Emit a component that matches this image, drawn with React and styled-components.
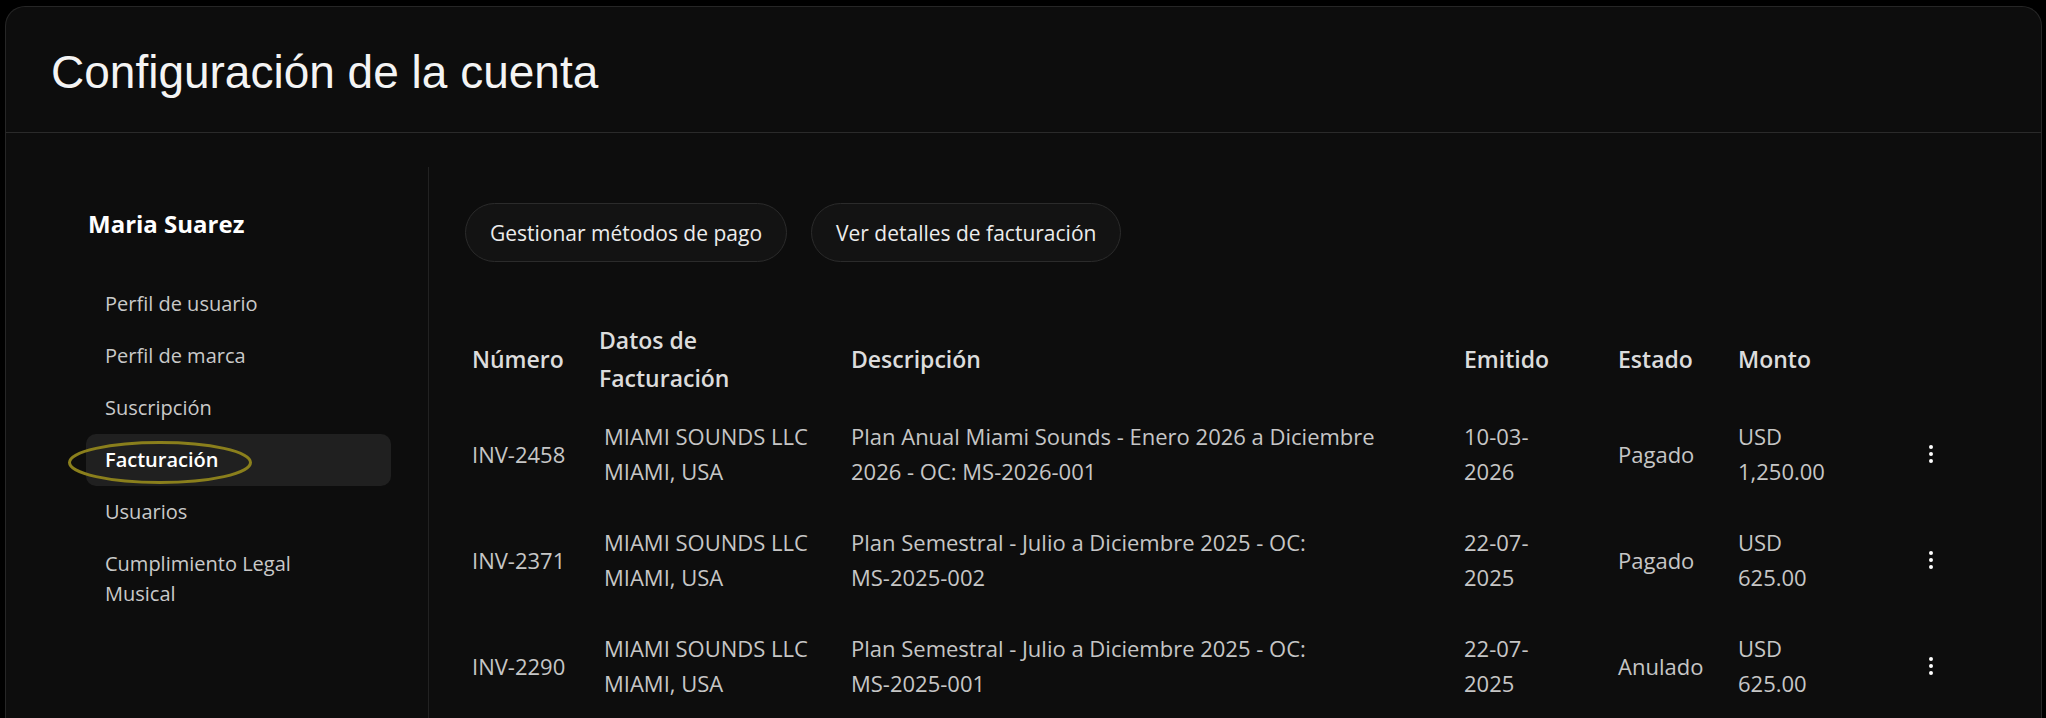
import React from 'react';
import styled, { createGlobalStyle } from 'styled-components';
import { EllipsisVertical } from 'lucide-react';

const GlobalStyle = createGlobalStyle`
  html, body {
    margin: 0;
    background: #000;
    overflow: hidden;
  }
  body {
    font-family: "Open Sans", "Liberation Sans", sans-serif;
  }
`;

const Card = styled.div`
  margin: 6px 4px 0 5px;
  min-height: 760px;
  background: #0d0d0d;
  border: 1px solid #262626;
  border-bottom: none;
  border-radius: 20px 20px 0 0;
  display: flex;
  flex-direction: column;
`;

const Header = styled.header`
  height: 126px;
  box-sizing: border-box;
  border-bottom: 1px solid #2a2a2a;
  display: flex;
  align-items: center;
  padding: 4px 45px 0;
`;

const Title = styled.h1`
  margin: 0;
  font-family: "Liberation Sans", Arial, sans-serif;
  font-weight: 400;
  font-size: 46px;
  color: #f4f4f4;
`;

const Body = styled.div`
  display: flex;
  flex: 1;
`;

const Sidebar = styled.aside`
  width: 423px;
  flex-shrink: 0;
  box-sizing: border-box;
  margin-top: 34px;
  padding: 42px 37px 0 80px;
  border-right: 1px solid #222;
`;

const UserName = styled.div`
  font-weight: 700;
  font-size: 24px;
  line-height: 30px;
  color: #fff;
  padding-left: 2px;
  margin-bottom: 39px;
`;

const NavList = styled.nav`
  display: flex;
  flex-direction: column;
`;

const NavItem = styled.a`
  position: relative;
  display: flex;
  align-items: center;
  min-height: 52px;
  box-sizing: border-box;
  padding: 11px 60px 11px 19px;
  border-radius: 10px;
  font-size: 20px;
  line-height: 30px;
  font-weight: ${(p) => (p.$active ? 600 : 500)};
  color: ${(p) => (p.$active ? '#fff' : '#c9c9c9')};
  background: ${(p) => (p.$active ? '#202020' : 'transparent')};
  text-decoration: none;
  cursor: pointer;
`;

/* hand-drawn ring around the current section */
const Ring = styled.svg`
  position: absolute;
  left: -18px;
  top: 7px;
  width: 184px;
  height: 43px;
  overflow: visible;
  pointer-events: none;
`;

const Main = styled.main`
  flex: 1;
  min-width: 0;
  padding: 70px 0 0 36px;
`;

const Actions = styled.div`
  display: flex;
  gap: 24px;
`;

const PillButton = styled.button`
  height: 59px;
  padding: 0 24px;
  border-radius: 30px;
  border: 1px solid #2b2b2b;
  background: #131313;
  color: #ececec;
  font-family: "Open Sans", sans-serif;
  font-size: 21px;
  font-weight: 500;
  cursor: pointer;
`;

const Table = styled.div`
  margin-top: 59px;
`;

const Row = styled.div`
  display: grid;
  grid-template-columns: 127px 252px 613px 154px 120px 160px 80px;
  align-items: center;
  padding: ${(p) => (p.$head ? '0 0 4px' : '18px 0')};
`;

const HeadCell = styled.div`
  padding-left: 7px;
  max-width: ${(p) => p.$maxw || 'none'};
  font-size: 23px;
  font-weight: 600;
  line-height: 38px;
  color: #dcdcdc;
`;

const Cell = styled.div`
  padding-left: ${(p) => (p.$indent ? 12 : 7)}px;
  max-width: ${(p) => p.$maxw || 'none'};
  font-size: 22px;
  line-height: 35px;
  color: #c6c6c6;
`;

const Code = styled.span`
  white-space: nowrap;
`;

const MenuCell = styled.div`
  display: flex;
  justify-content: center;
  color: #fff;
`;

const navItems = [
  'Perfil de usuario',
  'Perfil de marca',
  'Suscripción',
  'Facturación',
  'Usuarios',
  'Cumplimiento Legal Musical',
];

const invoices = [
  {
    id: 'INV-2458',
    desc: 'Plan Anual Miami Sounds - Enero 2026 a Diciembre 2026 - OC:',
    order: 'MS-2026-001',
    date: ['10-03-', '2026'],
    status: 'Pagado',
    amount: 'USD 1,250.00',
  },
  {
    id: 'INV-2371',
    desc: 'Plan Semestral - Julio a Diciembre 2025 - OC:',
    order: 'MS-2025-002',
    date: ['22-07-', '2025'],
    status: 'Pagado',
    amount: 'USD 625.00',
  },
  {
    id: 'INV-2290',
    desc: 'Plan Semestral - Julio a Diciembre 2025 - OC:',
    order: 'MS-2025-001',
    date: ['22-07-', '2025'],
    status: 'Anulado',
    amount: 'USD 625.00',
  },
];

export default function App() {
  return (
    <>
      <GlobalStyle />
      <Card>
        <Header>
          <Title>Configuración de la cuenta</Title>
        </Header>
        <Body>
          <Sidebar>
            <UserName>Maria Suarez</UserName>
            <NavList>
              {navItems.map((item) => (
                <NavItem key={item} $active={item === 'Facturación'}>
                  {item}
                  {item === 'Facturación' && (
                    <Ring viewBox="0 0 184 43">
                      <ellipse cx="92" cy="21.5" rx="90.5" ry="20" fill="none" stroke="#8a7f1c" strokeWidth="3" />
                    </Ring>
                  )}
                </NavItem>
              ))}
            </NavList>
          </Sidebar>
          <Main>
            <Actions>
              <PillButton>Gestionar métodos de pago</PillButton>
              <PillButton>Ver detalles de facturación</PillButton>
            </Actions>
            <Table>
              <Row $head>
                <HeadCell>Número</HeadCell>
                <HeadCell $maxw="170px">Datos de Facturación</HeadCell>
                <HeadCell>Descripción</HeadCell>
                <HeadCell>Emitido</HeadCell>
                <HeadCell>Estado</HeadCell>
                <HeadCell>Monto</HeadCell>
                <div />
              </Row>
              {invoices.map((inv) => (
                <Row key={inv.id}>
                  <Cell>{inv.id}</Cell>
                  <Cell $indent>
                    MIAMI SOUNDS LLC
                    <br />
                    MIAMI, USA
                  </Cell>
                  <Cell $maxw="575px">
                    {inv.desc} <Code>{inv.order}</Code>
                  </Cell>
                  <Cell $maxw="100px">
                    {inv.date[0]}
                    <wbr />
                    {inv.date[1]}
                  </Cell>
                  <Cell>{inv.status}</Cell>
                  <Cell $maxw="110px">{inv.amount}</Cell>
                  <MenuCell>
                    <EllipsisVertical size={24} strokeWidth={2} />
                  </MenuCell>
                </Row>
              ))}
            </Table>
          </Main>
        </Body>
      </Card>
    </>
  );
}
